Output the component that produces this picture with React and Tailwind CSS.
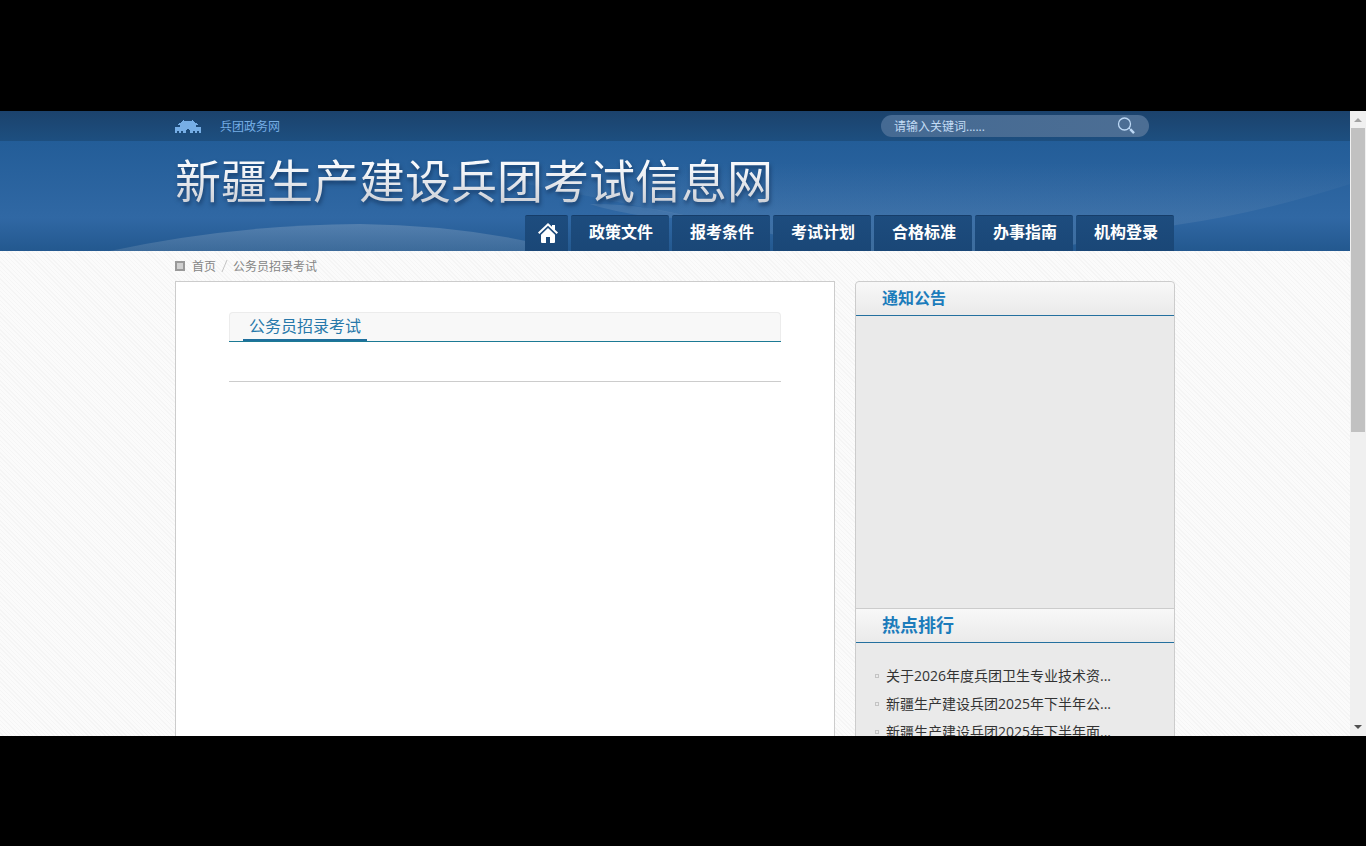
import React, { useState } from "react";

const navItems = ["政策文件", "报考条件", "考试计划", "合格标准", "办事指南", "机构登录"];

const hotNews = [
  { id: 1, title: "关于2026年度兵团卫生专业技术资..." },
  { id: 2, title: "新疆生产建设兵团2025年下半年公..." },
  { id: 3, title: "新疆生产建设兵团2025年下半年面..." },
];

const GateIcon = () => (
  <svg width="26" height="13" viewBox="0 0 26 13" fill="currentColor" aria-hidden="true">
    <path d="M8 0H9V1H17V0H18V1H19V2H20V3H22V4H23V5H21V7H26V13H24V11H22V13H20V11H18V13H15V10H14V9H12V10H11V13H8V11H6V13H4V11H2V13H0V7H5V5H3V4H4V3H6V2H7V1H8z" />
  </svg>
);

const HomeIcon = () => (
  <svg width="22" height="20" viewBox="0 0 22 20" fill="currentColor" aria-hidden="true">
    <path d="M11 0 1 9.6 2.4 11 11 2.8l8.6 8.2L21 9.6l-3-2.9V2h-3v1.8z" />
    <path d="M11 5 4 11.7V19q0 1 1 1h4v-6h4v6h4q1 0 1-1v-7.3z" />
  </svg>
);

const SearchIcon = () => (
  <svg width="20" height="18" viewBox="0 0 20 18" fill="none" stroke="currentColor" aria-hidden="true">
    <circle cx="7.5" cy="7" r="6" strokeWidth="1.3" />
    <path d="m12 11 1.5 1.5" strokeWidth="1" />
    <path d="m13.2 12.2 3.8 4" strokeWidth="2.4" />
  </svg>
);

// Fondo del encabezado
const HeaderWaves = () => (
  <svg
    className="absolute inset-0 h-full w-full"
    viewBox="0 0 1350 110"
    preserveAspectRatio="none"
    aria-hidden="true"
  >
    <defs>
      <linearGradient id="hill" x1="0" y1="0" x2="0" y2="1">
        <stop offset="0" stopColor="#8ca7c4" stopOpacity="0.4" />
        <stop offset="1" stopColor="#7896b4" stopOpacity="0.3" />
      </linearGradient>
      <linearGradient id="sweep" x1="0" y1="0" x2="0" y2="1">
        <stop offset="0.2" stopColor="#6f93b8" stopOpacity="0" />
        <stop offset="1" stopColor="#6f93b8" stopOpacity="0.35" />
      </linearGradient>
    </defs>
    <path d="M300 0H1350V43Q1260 72 1176 84L1040 110H850Q600 55 300 0z" fill="url(#sweep)" />
    <path d="M590 63Q640 62 700 78L650 76Q610 70 590 63z" fill="#7b9dc0" fillOpacity="0.25" />
    <path d="M110 110Q230 84 360 83Q470 84 570 110z" fill="url(#hill)" />
  </svg>
);

const TopBar = () => {
  const [keyword, setKeyword] = useState("");

  return (
    <div className="h-[30px] bg-linear-to-b from-[#1b426c] to-[#1d4f80]">
      <div className="mx-auto flex h-full max-w-[1000px] items-center justify-between">
        <a href="#" className="flex items-center gap-[19px] pt-px text-xs text-[#76aee6]">
          <GateIcon />
          兵团政务网
        </a>
        <form
          className="mr-[26px] flex h-[22px] w-[268px] items-center rounded-full bg-linear-to-r from-[#456a93] to-[#4c6e94] pr-3 pl-[13px]"
          onSubmit={(e) => e.preventDefault()}
        >
          <input
            type="text"
            aria-label="请输入关键词"
            className="min-w-0 flex-1 bg-transparent pt-px text-xs text-white outline-none placeholder:text-[#c3dcf5]"
            placeholder="请输入关键词......"
            value={keyword}
            onChange={(e) => setKeyword(e.target.value)}
          />
          <button type="submit" aria-label="搜索" className="text-[#bcd8f5]">
            <SearchIcon />
          </button>
        </form>
      </div>
    </div>
  );
};

const Header = () => (
  <header>
    <TopBar />
    <div className="relative h-[110px] bg-linear-to-b from-[#235d98] via-[#3068a4] via-70% to-[#23588f]">
      <HeaderWaves />
      <div className="relative mx-auto flex h-full max-w-[1000px] flex-col justify-between">
        <h1 className="pt-[11px] text-[46px] leading-[56px] drop-shadow-[1px_3px_2px_rgba(10,35,70,0.6)]">
          <a
            href="#"
            className="bg-linear-to-b from-[#f6f8fb] from-30% to-[#c4c8d0] bg-clip-text text-transparent"
          >
            新疆生产建设兵团考试信息网
          </a>
        </h1>
        <nav className="mr-px flex justify-end gap-[3px]">
          <a
            href="#"
            aria-label="首页"
            className="flex h-9 w-[43px] items-center justify-center rounded-t-[2px] border-t border-[#163d69] bg-linear-to-b from-[#1d4c7e] to-[#1a4777] pb-[2px] pl-1 text-white"
          >
            <HomeIcon />
          </a>
          {navItems.map((item) => (
            <a
              key={item}
              href="#"
              className="flex h-9 items-center rounded-t-[2px] border-t border-[#163d69] bg-linear-to-b from-[#1d4c7e] to-[#1a4777] pr-4 pb-[3px] pl-[18px] text-base font-bold text-white"
            >
              {item}
            </a>
          ))}
        </nav>
      </div>
    </div>
  </header>
);

const SideTitle = ({ children, className }) => (
  <h2
    className={`border-b border-[#24709f] bg-linear-to-b from-[#f8f8f8] to-[#eaeaea] pl-[26px] leading-[33px] font-bold text-[#1c7cbb] ${className}`}
  >
    {children}
  </h2>
);

const Sidebar = () => (
  <aside className="w-[320px] shrink-0 rounded-t border border-[#ccc] bg-[#eaeaea]">
    <section className="min-h-[326px]">
      <SideTitle className="rounded-t text-base">通知公告</SideTitle>
    </section>
    <section className="border-t border-[#ccc]">
      <SideTitle className="text-lg">热点排行</SideTitle>
      <ul className="pt-[19px] pr-5 pl-[19px]">
        {hotNews.map((news) => (
          <li key={news.id} className="flex items-center gap-[7px] text-sm leading-7 text-[#333]">
            <span className="size-1 border border-[#c4c4c4]" />
            <a href="#">{news.title}</a>
          </li>
        ))}
      </ul>
    </section>
  </aside>
);

const Breadcrumb = () => (
  <nav aria-label="Breadcrumb" className="flex h-[30px] items-center text-xs text-[#858585]">
    <span className="mr-[7px] size-[10px] border-2 border-[#999] bg-[#d0d0d0]" />
    <a href="#" className="pt-px">首页</a>
    <svg width="17" height="14" viewBox="0 0 17 14" stroke="#c4c4c4" aria-hidden="true">
      <path d="M6 13 11 1" />
    </svg>
    <a href="#" className="pt-px">公务员招录考试</a>
  </nav>
);

const Scrollbar = () => (
  <div className="flex w-4 shrink-0 flex-col items-center justify-between bg-[#f0f0f0]" aria-hidden="true">
    <div className="flex w-full flex-1 flex-col items-center">
      <svg width="16" height="17" viewBox="0 0 16 17">
        <path d="M4 11h8L8 7z" fill="#a3a3a3" />
      </svg>
      <div className="h-1/2 w-[14px] bg-[#c1c1c1]" />
    </div>
    <svg width="16" height="17" viewBox="0 0 16 17">
      <path d="M4 6h8l-4 4z" fill="#505050" />
    </svg>
  </div>
);

const App = () => {
  return (
    <div className="flex h-screen flex-col bg-black pt-[111px] pb-[110px] font-['Open_Sans','Noto_Sans_CJK_SC',sans-serif]">
      <div className="flex min-h-0 flex-1">
        <div className="min-w-0 flex-1 overflow-hidden bg-[repeating-linear-gradient(45deg,#fbfbfb_0px,#fbfbfb_2px,#f5f5f5_2px,#f5f5f5_3px)]">
          <Header />
          <div className="mx-auto max-w-[1000px]">
            <Breadcrumb />
            <div className="flex gap-5">
              <main className="min-h-[900px] flex-1 border border-[#ccc] bg-white px-[53px] pt-[30px]">
                <div className="border-b border-[#1c7a94]">
                  <div className="flex h-[29px] rounded-t border border-b-0 border-[#ececec] bg-[#f8f8f8] pl-[13px]">
                    <h2 className="border-b-2 border-[#1f6f9c] px-[6px] text-base leading-[26px] text-[#2778aa]">
                      公务员招录考试
                    </h2>
                  </div>
                </div>
                <div className="h-10 border-b border-[#ccc]" />
              </main>
              <Sidebar />
            </div>
          </div>
        </div>
        <Scrollbar />
      </div>
    </div>
  );
};

export default App;
